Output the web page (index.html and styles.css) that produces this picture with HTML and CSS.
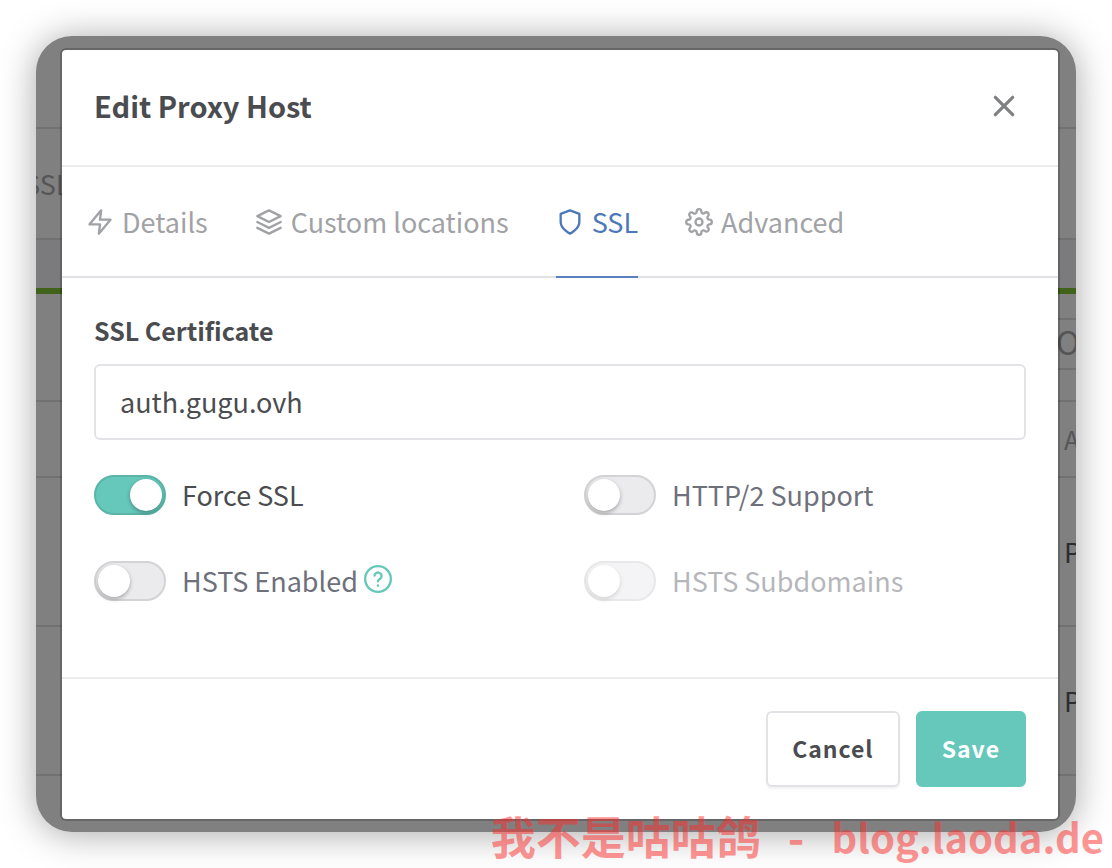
FILE: index.html
```html
<!DOCTYPE html>
<html lang="en">
<head>
  <meta charset="UTF-8">
  <meta name="viewport" content="width=device-width, initial-scale=1.0">
  <title>Edit Proxy Host</title>
  <link rel="stylesheet" href="styles.css">
</head>
<body>

  <main class="window">

    <!-- PAGE BEHIND THE MODAL -->
    <div class="page" aria-hidden="true">
      <div class="page-row page-top"></div>
      <div class="page-row page-menu"><span>SSL</span></div>
      <div class="page-space"></div>
      <div class="page-card">
        <div class="page-search"><span>O</span></div>
      </div>
      <div class="page-row page-head"><span>A</span></div>
      <div class="page-row page-item"><span>P</span></div>
      <div class="page-row page-item"><span>P</span></div>
    </div>

    <!-- MODAL -->
    <form class="modal" role="dialog" aria-labelledby="modal-title">
      <header class="modal-header">
        <h1 id="modal-title">Edit Proxy Host</h1>
        <button type="button" class="close" aria-label="Close">
          <svg viewBox="0 0 24 24"><path d="M4 4l16 16M20 4L4 20"/></svg>
        </button>
      </header>

      <!-- TABS -->
      <nav class="tabs">
        <a href="#details" class="tab">
          <svg class="icon" viewBox="0 0 24 24"><polygon points="13 2 3 14 12 14 11 22 21 10 12 10 13 2"/></svg>
          Details
        </a>
        <a href="#locations" class="tab">
          <svg class="icon" viewBox="0 0 24 24"><polygon points="12 2 2 7 12 12 22 7 12 2"/><polyline points="2 17 12 22 22 17"/><polyline points="2 12 12 17 22 12"/></svg>
          Custom locations
        </a>
        <a href="#ssl" class="tab active">
          <svg class="icon" viewBox="0 0 24 24"><path d="M12 22s8-4 8-10V5l-8-3-8 3v7c0 6 8 10 8 10z"/></svg>
          SSL
        </a>
        <a href="#advanced" class="tab">
          <svg class="icon" viewBox="0 0 24 24"><circle cx="12" cy="12" r="3"/><path d="M19.4 15a1.65 1.65 0 0 0 .33 1.82l.06.06a2 2 0 0 1 0 2.83 2 2 0 0 1-2.83 0l-.06-.06a1.65 1.65 0 0 0-1.82-.33 1.65 1.65 0 0 0-1 1.51V21a2 2 0 0 1-2 2 2 2 0 0 1-2-2v-.09A1.65 1.65 0 0 0 9 19.4a1.65 1.65 0 0 0-1.82.33l-.06.06a2 2 0 0 1-2.83 0 2 2 0 0 1 0-2.83l.06-.06a1.65 1.65 0 0 0 .33-1.82 1.65 1.65 0 0 0-1.51-1H3a2 2 0 0 1-2-2 2 2 0 0 1 2-2h.09A1.65 1.65 0 0 0 4.6 9a1.65 1.65 0 0 0-.33-1.82l-.06-.06a2 2 0 0 1 0-2.83 2 2 0 0 1 2.83 0l.06.06a1.65 1.65 0 0 0 1.82.33H9a1.65 1.65 0 0 0 1-1.51V3a2 2 0 0 1 2-2 2 2 0 0 1 2 2v.09a1.65 1.65 0 0 0 1 1.51 1.65 1.65 0 0 0 1.82-.33l.06-.06a2 2 0 0 1 2.83 0 2 2 0 0 1 0 2.83l-.06.06a1.65 1.65 0 0 0-.33 1.82V9a1.65 1.65 0 0 0 1.51 1H21a2 2 0 0 1 2 2 2 2 0 0 1-2 2h-.09a1.65 1.65 0 0 0-1.51 1z"/></svg>
          Advanced
        </a>
      </nav>

      <!-- SSL FORM -->
      <div class="modal-body">
        <label class="form-label" for="certificate">SSL Certificate</label>
        <select id="certificate" class="form-select">
          <option>auth.gugu.ovh</option>
        </select>

        <div class="switches">
          <label class="switch">
            <input type="checkbox" checked>
            <span>Force SSL</span>
          </label>
          <label class="switch">
            <input type="checkbox">
            <span>HTTP/2 Support</span>
          </label>
          <div class="switch">
            <input type="checkbox" id="hsts">
            <label for="hsts">HSTS Enabled</label>
            <a href="#hsts-help" class="help" aria-label="About HSTS">
              <svg class="icon" viewBox="0 0 24 24"><circle cx="12" cy="12" r="11"/><path d="M9 9a3 3 0 0 1 6 1c0 2-3 2-3 4"/><path d="M12 17.500v.2"/></svg>
            </a>
          </div>
          <label class="switch">
            <input type="checkbox" disabled>
            <span>HSTS Subdomains</span>
          </label>
        </div>
      </div>

      <footer class="modal-footer">
        <button type="button" class="btn">Cancel</button>
        <button type="submit" class="btn btn-save">Save</button>
      </footer>
    </form>
  </main>

  <p class="watermark"><span>我不是咕咕鸽</span><span>-</span><span class="site">blog.laoda.de</span></p>

</body>
</html>
```
FILE: styles.css
```css
/* ===== GENERAL ===== */
* {
  box-sizing: border-box;
}
body {
  margin: 0;
  padding: 36px;
  position: relative;
  background: white;
  color: #4a4c50;
  font-family: "Noto Sans CJK SC", "Noto Sans", sans-serif;
  font-size: 27px;
  line-height: 40px;
}
button, select {
  font: inherit;
  color: inherit;
}

/* ===== WINDOW ===== */
.window {
  position: relative;
  padding: 12px 16px 11px 24px;
  border-radius: 36px;
  background: #808080;
  box-shadow: 0 2px 36px rgba(0, 0, 0, 0.35);
  overflow: hidden;
}

/* ===== PAGE BEHIND THE MODAL ===== */
.page {
  position: absolute;
  inset: 0;
  color: #2c2d30;
}
.page-row {
  display: flex;
  align-items: center;
  justify-content: flex-end;
  border-bottom: 2px solid #707172;
}
.page-row span {
  width: 12px;
  white-space: nowrap;
}
.page-top {
  height: 93px;
}
.page-menu {
  height: 111px;
  justify-content: flex-start;
  color: #545557;
}
.page-menu span {
  margin-left: -12px;
}
.page-space {
  height: 48px;
  background: #7b7b7d;
}
.page-card {
  height: 114px;
  padding-top: 24px;
  border-top: 6px solid #40621a;
  border-bottom: 2px solid #707172;
}
.page-search {
  display: flex;
  align-items: center;
  justify-content: flex-end;
  height: 52px;
  margin-left: 50%;
  padding-bottom: 6px;
  border: 2px solid #707172;
  border-right: 0;
  color: #545557;
  font-size: 32px;
}
.page-search span {
  width: 20px;
}
.page-head {
  height: 76px;
  color: #545557;
  font-size: 25px;
}
.page-item {
  height: 149px;
}

/* ===== MODAL ===== */
.modal {
  position: relative;
  border: 2px solid rgba(0, 0, 0, 0.2);
  border-radius: 6px;
  background: white;
  background-clip: padding-box;
}
.modal-header {
  display: flex;
  justify-content: space-between;
  align-items: center;
  padding: 35px 41px 40px 32px;
  border-bottom: 2px solid #ececee;
}
.modal-header h1 {
  margin: 0;
  font-size: 29px;
  font-weight: bold;
}
.close {
  display: flex;
  padding: 2px 0 0;
  border: 0;
  background: none;
  cursor: pointer;
}
.close svg {
  width: 26px;
  height: 26px;
  fill: none;
  stroke: #808183;
  stroke-width: 3;
  stroke-linecap: round;
}

/* ===== TABS ===== */
.icon {
  width: 28px;
  height: 28px;
  flex: none;
  fill: none;
  stroke: currentColor;
  stroke-width: 2;
  stroke-linecap: round;
  stroke-linejoin: round;
}
.tabs {
  display: flex;
  gap: 47px;
  padding: 0 24px;
  border-bottom: 2px solid #e0e1e5;
}
.tab {
  display: flex;
  align-items: center;
  gap: 8px;
  margin-bottom: -2px;
  padding: 35px 0 34px;
  border-bottom: 2px solid transparent;
  color: #a1a2a5;
  text-decoration: none;
}
.tab.active {
  border-color: #5980bd;
  color: #4c78b9;
}

/* ===== SSL FORM ===== */
.modal-body {
  padding: 32px 32px 76px;
}
.form-label {
  display: block;
  margin-bottom: 14px;
  font-size: 25px;
  font-weight: bold;
}
.form-select {
  display: block;
  width: 100%;
  height: 76px;
  padding: 0 24px;
  border: 2px solid #e2e3e7;
  border-radius: 6px;
  background: white;
  appearance: none;
}
.switches {
  display: grid;
  grid-template-columns: 1fr 1fr;
  gap: 46px 48px;
  margin-top: 35px;
}
.switch {
  display: flex;
  align-items: center;
  gap: 16px;
  color: #6e707b;
}
.switch:has(input:checked) {
  color: #4a4c50;
}
.switch:has(input:disabled) {
  opacity: 0.5;
}
.switch input {
  width: 72px;
  height: 40px;
  flex: none;
  margin: 0;
  padding: 2px;
  border: 2px solid #d3d3d6;
  border-radius: 20px;
  background: #ebebee;
  appearance: none;
}
.switch input::before {
  content: "";
  display: block;
  width: 32px;
  height: 32px;
  border-radius: 50%;
  background: white;
  box-shadow: 0 2px 4px rgba(0, 0, 0, 0.3);
}
.switch input:checked {
  border-color: #5ab5a7;
  background: #65c8ba;
}
.switch input:checked::before {
  margin-left: auto;
}
.help {
  display: flex;
  margin-left: -10px;
  padding-bottom: 4px;
  color: #65c8ba;
}

/* ===== FOOTER ===== */
.modal-footer {
  display: flex;
  justify-content: flex-end;
  gap: 16px;
  padding: 32px;
  border-top: 2px solid #ececee;
}
.btn {
  height: 76px;
  padding: 0 24px 2px;
  border: 2px solid #e2e3e7;
  border-radius: 6px;
  background: white;
  box-shadow: 0 2px 2px rgba(0, 0, 0, 0.05);
  font-size: 23px;
  font-weight: bold;
  letter-spacing: 1px;
  cursor: pointer;
}
.btn-save {
  border-color: #65c8ba;
  background: #65c8ba;
  box-shadow: none;
  color: white;
}

/* ===== WATERMARK ===== */
.watermark {
  position: absolute;
  right: 8px;
  bottom: 12px;
  display: flex;
  align-items: center;
  gap: 27px;
  margin: 0;
  color: rgba(255, 45, 45, 0.5);
  font-size: 45px;
  font-weight: bold;
}
.site {
  font-size: 40px;
}
```
